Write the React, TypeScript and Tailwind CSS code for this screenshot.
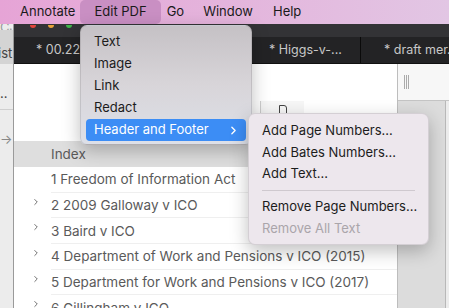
import { ChevronRight } from "lucide-react";

const rows = [
  "1 Freedom of Information Act",
  "2 2009 Galloway v ICO",
  "3 Baird v ICO",
  "4 Department of Work and Pensions v ICO (2015)",
  "5 Department for Work and Pensions v ICO (2017)",
  "6 Gillingham v ICO",
];

function MenuBar() {
  return (
    <div className="flex h-[24px] shrink-0 items-center whitespace-nowrap bg-gradient-to-r from-[#e6a4d6] via-[#e4b4dc] to-[#e2c6e4] text-[13px] text-[#1a1a1a]">
      <span className="ml-[20px]">Annotate</span>
      <span className="ml-[5px] flex h-[24px] items-center rounded-[5px] bg-[#c98fc3] px-[14px]">Edit PDF</span>
      <span className="ml-[6px]">Go</span>
      <span className="ml-[19px]">Window</span>
      <span className="ml-[20px]">Help</span>
    </div>
  );
}

function EditMenu() {
  const items = ["Text", "Image", "Link", "Redact"];
  return (
    <div className="absolute left-[80px] top-[25px] w-[172px] rounded-[7px] border border-black/10 bg-gradient-to-b from-[#c5c1c5] via-[#d8d5d9] to-[#dde0e8] pb-[3px] pt-[5px] text-[13px] text-[#1c1c1c] shadow-[0_6px_18px_rgba(0,0,0,0.25)]">
      {items.map((t) => (
        <div key={t} className="flex h-[22px] items-center pl-[13px]">
          {t}
        </div>
      ))}
      <div className="mx-[5px] flex h-[22px] items-center justify-between rounded-[4px] bg-[#3c8df5] pl-[8px] pr-[6px] text-white">
        <span>Header and Footer</span>
        <ChevronRight size={13} strokeWidth={2.5} />
      </div>
    </div>
  );
}

function SubMenu() {
  return (
    <div className="absolute left-[248px] top-[113px] w-[181px] rounded-[7px] border border-black/10 bg-[#ede7ed] pb-[5px] pt-[6px] text-[13px] text-[#1c1c1c] shadow-[0_6px_18px_rgba(0,0,0,0.25)]">
      <div className="flex h-[22px] items-center pl-[13px]">Add Page Numbers...</div>
      <div className="flex h-[21px] items-center pl-[13px]">Add Bates Numbers...</div>
      <div className="flex h-[22px] items-center pl-[13px]">Add Text...</div>
      <div className="flex h-[11px] items-center px-[13px]">
        <div className="h-px w-full bg-[#cfc9cf]" />
      </div>
      <div className="flex h-[22px] items-center pl-[13px]">Remove Page Numbers...</div>
      <div className="flex h-[21px] items-center pl-[13px] text-[#aaa5aa]">Remove All Text</div>
    </div>
  );
}

export default function App() {
  return (
    <div className="relative flex h-[308px] w-[449px] flex-col overflow-hidden bg-white font-['Inter',sans-serif]">
      <MenuBar />
      <div className="flex h-[284px] shrink-0">
        {/* left edge of the window behind */}
        <div className="flex w-[14px] shrink-0 flex-col border-r border-[#9a9a9a] bg-[#ececec] text-[13px] text-[#444]">
          <div className="h-[6px] shrink-0 overflow-hidden leading-[6px] text-[#999]">CJ</div>
          <div className="h-[14px] shrink-0 bg-[#d4d4d4]" />
          <div className="-ml-[2px] flex h-[20px] shrink-0 items-center bg-[#d4d4d4]">ist</div>
          <div className="h-[24px] shrink-0" />
          <div className="h-[14px] shrink-0 leading-[10px]">..</div>
          <div className="h-[8px] shrink-0 border-b border-[#cfcfcf]" />
          <div className="flex h-[60px] shrink-0 items-center text-[#888]">→</div>
        </div>
        <div className="flex min-w-0 flex-1 flex-col">
          <div className="flex h-[13px] shrink-0 items-center gap-[12px] bg-[#333336] pl-[16px]">
            <span className="h-[3px] w-[6px] -translate-y-[4px] rounded-b-full bg-[#e2453c]" />
            <span className="h-[3px] w-[6px] -translate-y-[4px] rounded-b-full bg-[#e8a23a]" />
            <span className="h-[3px] w-[6px] -translate-y-[4px] rounded-b-full bg-[#3fb54a]" />
          </div>
          <div className="flex h-[27px] shrink-0 whitespace-nowrap border-b border-[#111] bg-[#232325] text-[12.5px] text-[#c8c8c8]">
            <div className="flex w-[226px] shrink-0 items-center pl-[22px]">* 00.22.</div>
            <div className="flex w-[120px] shrink-0 items-center border-l border-[#0a0a0a] pl-[28px]">* Higgs-v-...</div>
            <div className="flex flex-1 items-center overflow-hidden border-l border-[#0a0a0a] pl-[23px]">* draft mer...</div>
          </div>
          <div className="flex min-h-0 flex-1">
            <div className="flex w-[384px] shrink-0 flex-col border-r border-[#bdbdbd] bg-white text-[13.5px] text-[#5a5a5a]">
              <div className="h-[36px] shrink-0" />
              <div className="flex h-[18px] shrink-0 items-end pl-[246px]">
                <div className="flex h-[17px] w-[44px] items-start justify-center border-l border-[#cfcfcf] bg-[#f6f6f6]">
                  <span className="mt-[4px] h-[11px] w-[8px] rounded-tr-[3px] border border-[#444]" />
                </div>
              </div>
              <div className="h-[23px] shrink-0" />
              <div className="flex h-[26px] shrink-0 items-center bg-[#dedede] pl-[37px]">Index</div>
              {rows.map((r, i) => (
                <div key={r} className="flex h-[25.7px] shrink-0 items-center">
                  <div className="flex w-[37px] justify-end pb-[8px] pr-[10px] text-[#555]">
                    {i > 0 && <ChevronRight size={10} strokeWidth={2} />}
                  </div>
                  <div className="flex h-full flex-1 items-center whitespace-nowrap border-b border-[#efefef]">{r}</div>
                </div>
              ))}
            </div>
            <div className="flex flex-1 flex-col">
              <div className="flex h-[37px] shrink-0 items-center border-b border-[#c4c4c4] bg-[#f7f7f7] pl-[6px]">
                <span className="h-[14px] w-[5px] border-x border-[#aaa] bg-[linear-gradient(90deg,transparent_1px,#aaa_1px,#aaa_2px,transparent_2px)]" />
              </div>
              <div className="flex flex-1">
                <div className="w-[48px] border-r border-[#b8b8b8] bg-[#dcdcdc]" />
                <div className="flex-1 bg-[#ececec]" />
              </div>
            </div>
          </div>
        </div>
      </div>
      <EditMenu />
      <SubMenu />
    </div>
  );
}
